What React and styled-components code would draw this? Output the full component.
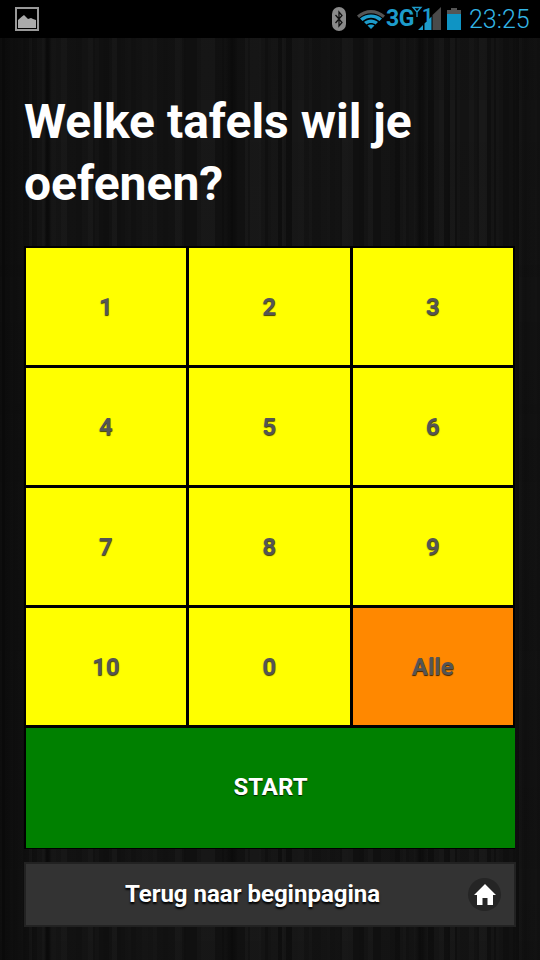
import React from 'react';
import styled, { createGlobalStyle } from 'styled-components';

const GlobalStyle = createGlobalStyle`
  html, body {
    margin: 0;
    padding: 0;
    background: #111;
  }
  * {
    box-sizing: border-box;
  }
`;

// fine wood grain, made once from a small seeded generator
const makeRandom = (start) => {
  let seed = start;
  return () => {
    seed = (seed * 16807) % 2147483647;
    return seed / 2147483647;
  };
};

const makeGrain = () => {
  const next = makeRandom(7);
  const stops = [];
  let x = 0;
  while (x < 540) {
    const w = 2 + Math.floor(next() * 5);
    const v = Math.round(14 + next() * 11);
    stops.push(`rgb(${v},${v},${v}) ${x}px ${x + w}px`);
    x += w;
  }
  return `linear-gradient(90deg, ${stops.join(',')})`;
};

// breaks the stripes up along their length
const makeFade = () => {
  const next = makeRandom(91);
  const stops = [];
  let y = 0;
  while (y < 960) {
    const h = 10 + Math.floor(next() * 40);
    const a = (next() * 0.28).toFixed(2);
    stops.push(`rgba(16,16,16,${a}) ${y}px ${y + h}px`);
    y += h;
  }
  return `linear-gradient(180deg, ${stops.join(',')})`;
};

const darkBands = `linear-gradient(90deg,
  rgba(0,0,0,0.4) 0px, rgba(0,0,0,0.25) 20px, rgba(0,0,0,0) 36px,
  rgba(0,0,0,0) 44px, rgba(0,0,0,0.6) 47px, rgba(0,0,0,0) 52px, rgba(0,0,0,0) 226px,
  rgba(0,0,0,0.45) 232px, rgba(0,0,0,0) 238px, rgba(0,0,0,0) 414px,
  rgba(0,0,0,0.5) 420px, rgba(0,0,0,0) 428px, rgba(0,0,0,0) 515px,
  rgba(0,0,0,0.3) 525px, rgba(0,0,0,0.15) 540px)`;

const labels = ['1', '2', '3', '4', '5', '6', '7', '8', '9', '10', '0', 'Alle'];

const App = () => {
  return (
    <>
      <GlobalStyle />
      <Screen>
        <StatusBar>
          <PictureIcon viewBox="0 0 24 24">
            <rect x="1" y="1" width="22" height="22" fill="none" stroke="#999" strokeWidth="2" />
            <path d="M3 21V13L7 9.5L9 8L11 10L13 12L16 11L18 12L21 13V21Z" fill="#aaa" />
          </PictureIcon>
          <StatusRight>
            <BluetoothIcon viewBox="0 0 14 24">
              <rect x="0" y="0" width="14" height="24" rx="7" fill="#8a8a8a" />
              <path d="M3.5 8L10 15.5L7 19V5L10 8.5L3.5 16" fill="none" stroke="#111" strokeWidth="1.3" />
            </BluetoothIcon>
            <WifiIcon viewBox="0 0 30 21">
              <path d="M1 7.5C9 0 21 0 29 7.5L27 10C20 3.5 10 3.5 3 10Z" fill="#555" />
              <path d="M4 10.5C10 5 20 5 26 10.5L23.5 13C18 8.5 12 8.5 6.5 13Z" fill="#1d9ccb" />
              <path d="M8 14C12 10.5 18 10.5 22 14L19.5 16.5C17 14.5 13 14.5 10.5 16.5Z" fill="#1d9ccb" />
              <path d="M11.5 17.5C13.5 16 16.5 16 18.5 17.5L15 21Z" fill="#1d9ccb" />
            </WifiIcon>
            <NetworkType>3G</NetworkType>
            <SignalIcon viewBox="0 -4 34 30">
              <path d="M24.5 9V24H33V1Z" fill="#4a4a4a" />
              <path d="M10 24L15 19V24Z M16.5 17.5L23.5 10.5V24H16.5Z" fill="#1d9ccb" />
              <path d="M5 1.5H13L9 6Z M9 6V11" fill="none" stroke="#1d9ccb" strokeWidth="1.3" />
              <text x="14" y="15" fontFamily="Roboto, sans-serif" fontWeight="700" fontSize="19" fill="#1d9ccb">1</text>
            </SignalIcon>
            <BatteryIcon viewBox="0 0 14 22">
              <rect x="4" y="0" width="6" height="2" fill="#555" />
              <rect x="0" y="2" width="14" height="4" fill="#555" />
              <rect x="0" y="6" width="14" height="16" fill="#0f94c4" />
            </BatteryIcon>
            <Clock>23:25</Clock>
          </StatusRight>
        </StatusBar>

        <Content>
          <Title>Welke tafels wil je oefenen?</Title>
          <Board>
            <TableGrid>
              {labels.map((label) => (
                <TableCell key={label} $all={label === 'Alle'}>
                  {label}
                </TableCell>
              ))}
            </TableGrid>
            <StartButton>START</StartButton>
          </Board>
          <BackButton>
            <BackLabel>Terug naar beginpagina</BackLabel>
            <HomeBadge>
              <svg viewBox="0 0 22 21" width="22" height="21">
                <path d="M11 0L22 11H19V21H13.5V14H8.5V21H3V11H0Z" fill="#fff" />
              </svg>
            </HomeBadge>
          </BackButton>
        </Content>
      </Screen>
    </>
  );
};

const Screen = styled.div`
  width: 540px;
  height: 960px;
  overflow: hidden;
  display: flex;
  flex-direction: column;
  font-family: Roboto, sans-serif;
  background-image: ${darkBands}, ${makeFade()}, ${makeGrain()};
`;

const StatusBar = styled.div`
  height: 38px;
  flex: none;
  background: #000;
  display: flex;
  align-items: center;
  justify-content: space-between;
  padding: 0 10px 0 15px;
`;

const StatusRight = styled.div`
  display: flex;
  align-items: center;
`;

const PictureIcon = styled.svg`
  width: 24px;
  height: 24px;
  margin-top: -1px;
`;

const BluetoothIcon = styled.svg`
  width: 14px;
  height: 24px;
  margin-right: 10px;
`;

const WifiIcon = styled.svg`
  width: 30px;
  height: 21px;
  margin-top: -1px;
`;

const NetworkType = styled.span`
  font-size: 23px;
  font-weight: 700;
  color: #1d9ccb;
  letter-spacing: -0.5px;
  width: 24px;
  margin-top: -1px;
`;

const SignalIcon = styled.svg`
  width: 34px;
  height: 30px;
  margin-left: -2px;
  margin-right: 5px;
  margin-top: -5px;
`;

const BatteryIcon = styled.svg`
  width: 14px;
  height: 22px;
  margin-right: 8px;
`;

const Clock = styled.span`
  font-size: 25px;
  font-weight: 300;
  color: #33b5e5;
  width: 61px;
`;

const Content = styled.div`
  padding: 53px 24px 0;
`;

const Title = styled.h1`
  margin: 0 0 31px;
  font-size: 48px;
  line-height: 62px;
  font-weight: 700;
  color: #fff;
`;

const Board = styled.div`
  width: 491px;
`;

const TableGrid = styled.div`
  display: grid;
  grid-template-columns: 160px 161px 160px;
  grid-auto-rows: 117px;
  gap: 3px;
  padding: 2px 2px 3px;
  background: #000;
`;

const TableCell = styled.div`
  display: flex;
  align-items: center;
  justify-content: center;
  background: ${(p) => (p.$all ? '#ff8800' : '#ffff00')};
  color: #555;
  font-size: 24px;
  font-weight: 700;
  text-shadow: 0 1px 1px rgba(0, 0, 0, 0.75);
`;

const StartButton = styled.div`
  height: 121px;
  padding-bottom: 2px;
  display: flex;
  align-items: center;
  justify-content: center;
  background: #008000;
  border-left: 2px solid #000;
  border-bottom: 1px solid #000;
  color: #fff;
  font-size: 24px;
  font-weight: 700;
  text-shadow: 0 1px 1px rgba(0, 0, 0, 0.75);
`;

const BackButton = styled.div`
  width: 492px;
  height: 65px;
  margin-top: 13px;
  display: flex;
  align-items: center;
  background: #333;
  border: 2px solid #222;
  padding: 0 13px 0 11px;
`;

const BackLabel = styled.span`
  flex: 1;
  margin-top: -2px;
  text-align: center;
  color: #fff;
  font-size: 24px;
  font-weight: 700;
  text-shadow: 0 2px 2px #000;
`;

const HomeBadge = styled.span`
  width: 33px;
  height: 33px;
  border-radius: 50%;
  background: #252525;
  display: flex;
  align-items: center;
  justify-content: center;
`;

export default App;
